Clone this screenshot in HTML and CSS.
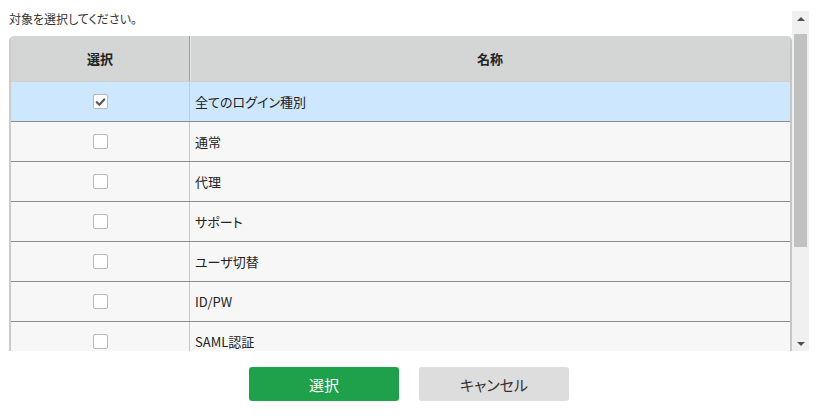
FILE: index.html
```html
<!DOCTYPE html>
<html lang="ja">
<head>
<meta charset="utf-8">
<link rel="stylesheet" href="styles.css">
</head>
<body>
<div class="frame">
  <div class="content">
    <p class="prompt">対象を選択してください。</p>
    <div class="table">
      <div class="row head">
        <div class="c1">選択</div>
        <div class="c2">名称</div>
      </div>
      <div class="row sel">
        <div class="c1"><span class="cb on"><svg viewBox="0 0 14 14" width="14" height="14"><path d="M3 7.2 L5.8 10 L11 4.2" fill="none" stroke="#5a5a5a" stroke-width="2.4" stroke-linecap="round" stroke-linejoin="round"/></svg></span></div>
        <div class="c2">全てのログイン種別</div>
      </div>
      <div class="row"><div class="c1"><span class="cb"></span></div><div class="c2">通常</div></div>
      <div class="row"><div class="c1"><span class="cb"></span></div><div class="c2">代理</div></div>
      <div class="row"><div class="c1"><span class="cb"></span></div><div class="c2">サポート</div></div>
      <div class="row"><div class="c1"><span class="cb"></span></div><div class="c2">ユーザ切替</div></div>
      <div class="row"><div class="c1"><span class="cb"></span></div><div class="c2">ID/PW</div></div>
      <div class="row"><div class="c1"><span class="cb"></span></div><div class="c2">SAML認証</div></div>
    </div>
  </div>
  <div class="sbar">
    <span class="arr up"></span>
    <div class="track"><div class="thumb"></div></div>
    <span class="arr down"></span>
  </div>
</div>
<div class="actions">
  <button class="btn ok">選択</button>
  <button class="btn cancel">キャンセル</button>
</div>
</body>
</html>
```
FILE: styles.css
```css
* { box-sizing: border-box; }
html, body { margin: 0; padding: 0; background: #fff; }
body {
  font-family: "Noto Sans CJK JP", "Noto Sans", sans-serif;
  font-feature-settings: "palt";
  color: #222;
  width: 820px;
  height: 420px;
  overflow: hidden;
}
.frame {
  margin-top: 11px;
  height: 340px;
  width: 809px;
  display: flex;
}
.content {
  width: 792px;
  height: 340px;
  overflow: hidden;
  padding-left: 9px;
}
.prompt {
  margin: 0;
  height: 25px;
  font-size: 12px;
  line-height: 14px;
  padding-top: 1px;
  color: #333;
}
.table {
  border-left: 2px solid #cbcbcb;
  border-right: 2px solid #c6c6c6;
  border-radius: 5px 5px 0 0;
  overflow: hidden;
}
.row {
  display: flex;
  height: 40px;
  background: #f7f7f7;
  border-bottom: 1px solid #8c8c8c;
  font-size: 13px;
}
.row.head {
  height: 45px;
  background: #d4d5d5;
  border-bottom: none;
  font-weight: bold;
  font-size: 13px;
}
.row.sel { background: #cce7fe; border-top: 1px solid #d0d0d0; height: 41px; }
.c1 {
  width: 179px;
  display: flex;
  align-items: center;
  justify-content: center;
  border-right: 1px solid #c8c8c8;
}
.row.head .c1 { border-right: 1px solid #9c9c9c; box-shadow: 1px 0 0 #e6e6e6; }
.c2 {
  flex: 1;
  display: flex;
  align-items: center;
  padding-left: 5px;
}
.row.head .c2 { justify-content: center; padding-left: 0; }
.cb {
  width: 15px;
  height: 15px;
  border: 1px solid #b8b8b8;
  border-radius: 2px;
  background: #fff;
  display: flex;
  align-items: center;
  justify-content: center;
  margin-left: 1px;
}
.cb svg { display: block; }
.sbar {
  width: 17px;
  height: 340px;
  background: #f0f0f0;
  display: flex;
  flex-direction: column;
  align-items: center;
}
.arr {
  width: 0; height: 0;
  border-left: 4px solid transparent;
  border-right: 4px solid transparent;
}
.arr.up { border-bottom: 4px solid #505050; margin-top: 6px; margin-bottom: 13px; }
.arr.down { border-top: 4px solid #505050; margin-top: auto; margin-bottom: 5px; }
.track { width: 13px; flex: 0 0 auto; }
.thumb { width: 13px; height: 213px; background: #c1c1c1; }
.actions {
  display: flex;
  justify-content: center;
  gap: 20px;
  margin-top: 16px;
  padding-right: 2px;
}
.btn {
  width: 150px;
  height: 34px;
  border: none;
  border-radius: 3px;
  font-family: "Noto Sans CJK JP", sans-serif;
  font-feature-settings: "palt";
  font-size: 15px;
  padding: 0;
}
.btn.ok { background: #1fa04b; color: #fff; }
.btn.cancel { background: #dddddd; color: #333; }
```
